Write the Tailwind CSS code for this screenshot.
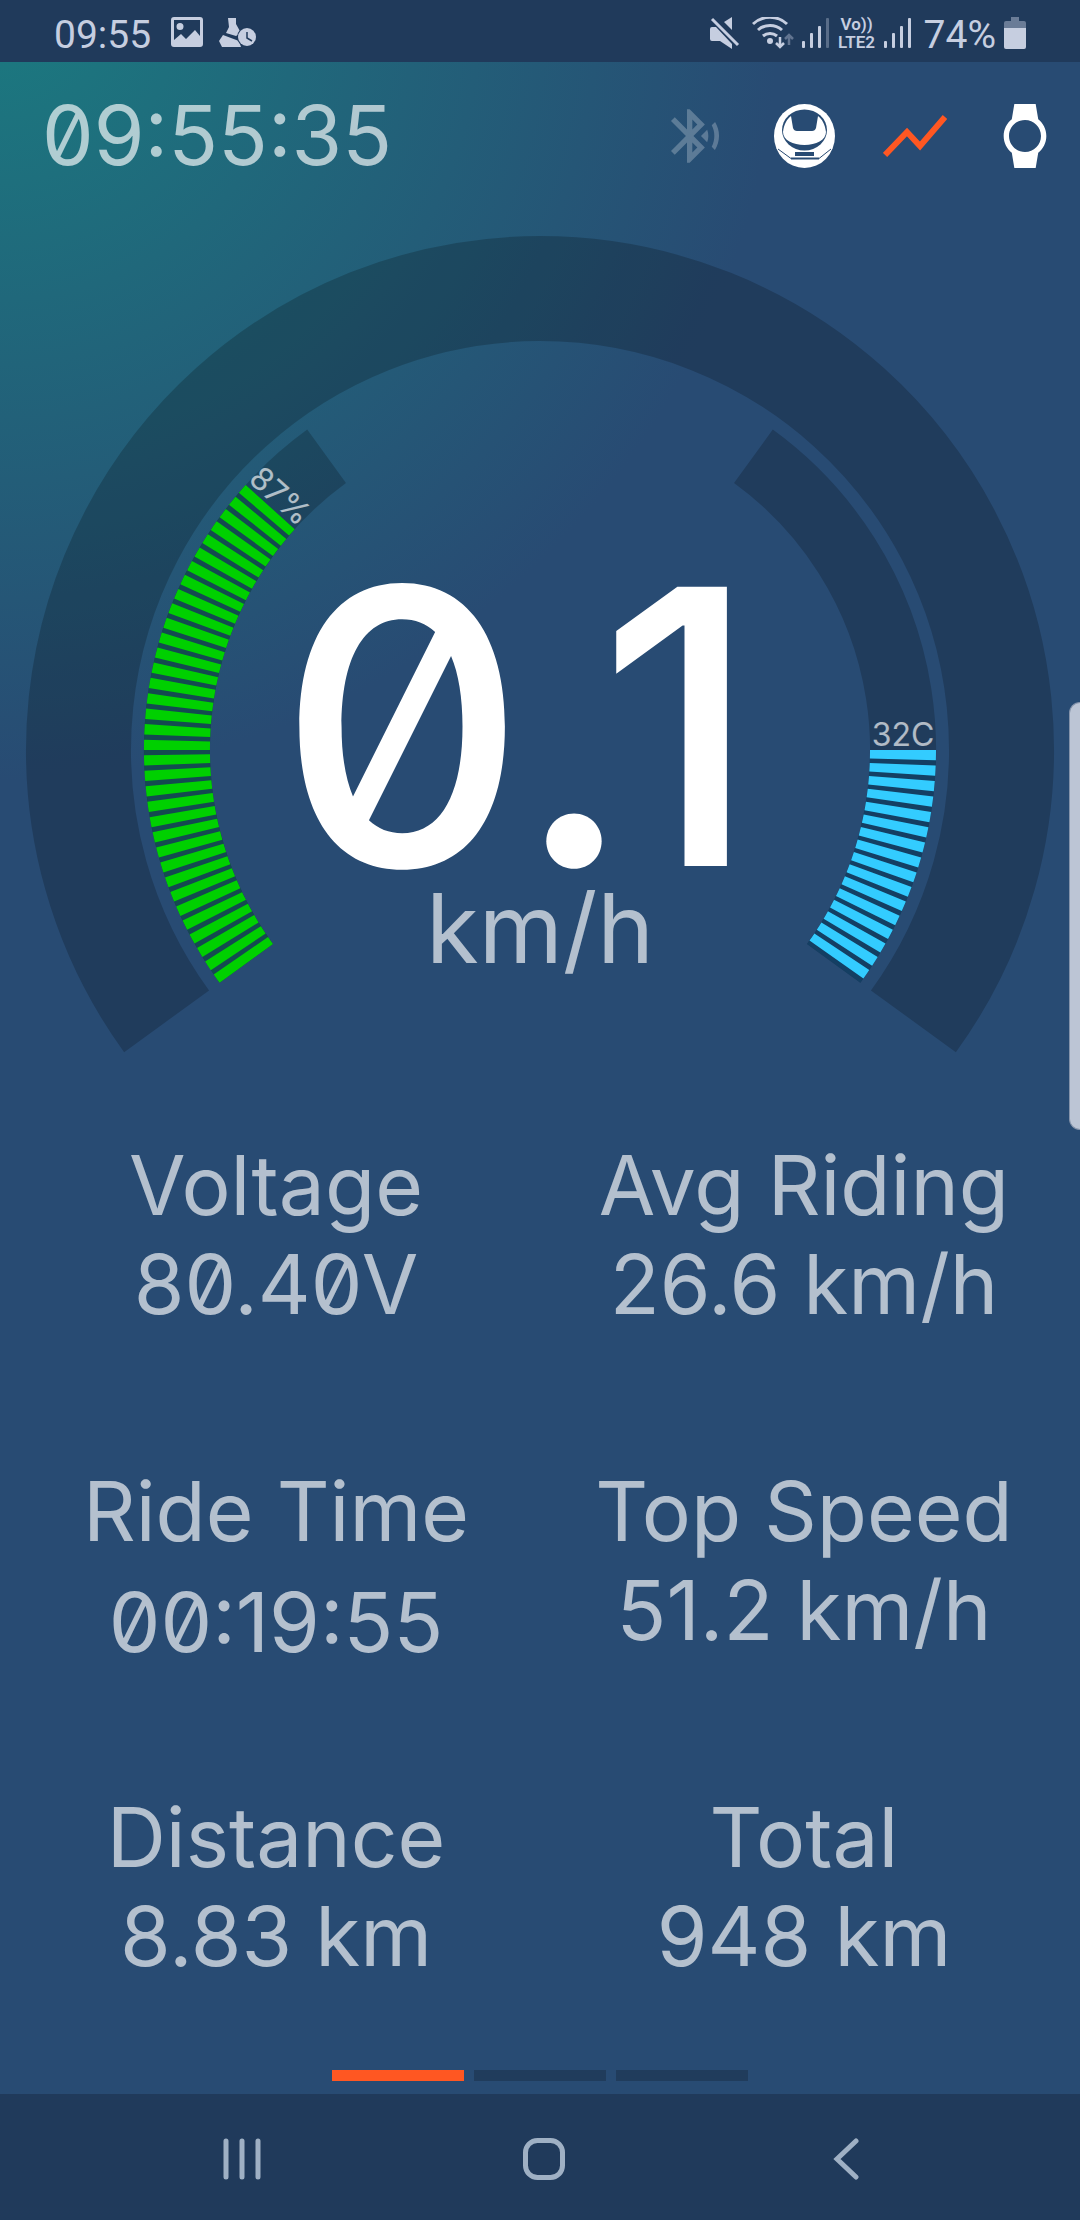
<!DOCTYPE html>
<html lang="en">
<head>
    <meta charset="UTF-8">
    <meta name="viewport" content="width=device-width, initial-scale=1.0">
    <title>Ride Dashboard</title>
    <script src="https://cdn.jsdelivr.net/npm/@tailwindcss/browser@4"></script>
</head>
<body class="min-h-screen flex flex-col bg-[#284b73] font-['Inter','Roboto',sans-serif] overflow-x-hidden">

<!-- Status bar -->
<header class="h-[62px] shrink-0 bg-[#203a5b] text-[#c6cee0] font-['Roboto','Liberation_Sans',sans-serif] flex items-center justify-between px-[54px]">
    <div class="flex items-center">
        <span class="text-[39px] leading-none mt-2">09:55</span>
        <svg class="w-8 h-8 ml-5 mt-1" viewBox="0 0 32 32" fill="currentColor">
            <path fill-rule="evenodd" d="M3 0h26a3 3 0 0 1 3 3v24a3 3 0 0 1-3 3H3a3 3 0 0 1-3-3V3a3 3 0 0 1 3-3zM3 3v20l7-6 5 5 9-9 5 6V3zM9 6a3.500 3.500 0 1 1 0 7 3.500 3.500 0 0 1 0-7z"/>
        </svg>
        <svg class="w-[38px] h-8 ml-4 mt-1" viewBox="0 0 38 32" fill="currentColor">
            <path d="M9 1h8v6l5 9-5 3-10-3 3-6z"/>
            <path d="M4 18l16 6 2 6H3l-3-6z"/>
            <circle cx="28" cy="20" r="10" fill="#203a5b"/>
            <circle cx="28" cy="20" r="9"/>
            <path d="M28 15v6l5 3" fill="none" stroke="#203a5b" stroke-width="1.500"/>
        </svg>
    </div>
    <div class="flex items-center">
        <!-- Muted -->
        <svg class="w-[30px] h-8 mt-1" viewBox="0 0 30 32" fill="currentColor">
            <path d="M0 12q0-2 2-2h4l16 17v5L10 24H2q-2 0-2-2zM22 0v13l-8-8z"/>
            <path d="M2 2l26 26" stroke="currentColor" stroke-width="3" fill="none"/>
        </svg>
        <!-- Wi-Fi -->
        <svg class="w-[44px] h-8 ml-3 mt-1" viewBox="0 0 44 32" fill="none" stroke="currentColor" stroke-width="3">
            <path d="M1 7a25 25 0 0 1 34 0M6 13a18 18 0 0 1 24 0M11 19a11 11 0 0 1 14 0"/>
            <circle cx="18" cy="24" r="3" fill="currentColor" stroke="none"/>
            <path d="M28 20v10M24 26l4 4 4-4" stroke-width="2.500"/>
            <path d="M37 28V18M33 22l4-4 4 4" stroke-width="2.500" class="opacity-40"/>
        </svg>
        <!-- SIM 1 -->
        <svg class="w-7 h-8 ml-1.5 mt-1" viewBox="0 0 28 32" fill="currentColor">
            <rect x="0" y="24" width="3" height="7" rx="1"/>
            <rect x="8" y="16" width="3" height="15" rx="1"/>
            <rect x="16" y="9" width="3" height="22" rx="1"/>
            <rect x="24" y="1" width="3" height="30" rx="1" class="opacity-35"/>
        </svg>
        <div class="ml-1.5 w-[42px] mt-1 text-[17px]/[18px] font-semibold text-center">Vo))<br>LTE2</div>
        <!-- SIM 2 -->
        <svg class="w-7 h-8 ml-1.5 mt-1" viewBox="0 0 28 32" fill="currentColor">
            <rect x="0" y="24" width="3" height="7" rx="1"/>
            <rect x="8" y="16" width="3" height="15" rx="1"/>
            <rect x="16" y="9" width="3" height="22" rx="1"/>
            <rect x="24" y="1" width="3" height="30" rx="1"/>
        </svg>
        <span class="text-[39px] leading-none ml-3 mt-2">74%</span>
        <svg class="w-[22px] h-8 ml-2 mt-1" viewBox="0 0 22 32" fill="currentColor">
            <path d="M7 0h8v4h5a2 2 0 0 1 2 2v5H0V6a2 2 0 0 1 2-2h5z" class="opacity-45"/>
            <path d="M0 11h22v19a2 2 0 0 1-2 2H2a2 2 0 0 1-2-2z"/>
        </svg>
    </div>
</header>

<main class="flex-1 flex flex-col bg-[radial-gradient(circle_780px_at_0_-62px,#1b7a80,#284b73)] text-white/65 slashed-zero">

    <!-- Clock and toolbar -->
    <div class="h-[148px] flex items-center justify-between pl-[42px] pr-[23px]">
        <span class="text-[82px] leading-none">09:55:35</span>
        <div class="flex gap-[46px] text-white">
            <button type="button" aria-label="Bluetooth" class="w-16 h-16 text-white/25">
                <svg viewBox="0 0 24 24" fill="currentColor">
                    <path d="M14.240 12.010l2.320 2.320c.28-.72.44-1.510.44-2.330 0-.82-.16-1.590-.43-2.310l-2.330 2.320zm5.290-5.300l-1.260 1.260c.63 1.210.98 2.570.98 4.020s-.36 2.820-.98 4.020l1.200 1.200c.97-1.540 1.540-3.360 1.540-5.310-.01-1.890-.55-3.670-1.480-5.190zm-3.820 1L10 2H9v7.590L4.410 5 3 6.410 8.590 12 3 17.590 4.410 19 9 14.410V22h1l5.710-5.710-4.300-4.290 4.300-4.290zM11 5.830l1.880 1.880L11 9.590V5.830zm1.880 10.460L11 18.170v-3.760l1.880 1.880z"/>
                </svg>
            </button>
            <button type="button" aria-label="Wheel" class="w-16 h-16">
                <svg viewBox="0 0 64 64" fill="currentColor">
                    <ellipse cx="31.500" cy="32" rx="30.500" ry="32"/>
                    <g fill="#284b73">
                        <ellipse cx="31.500" cy="26" rx="22.500" ry="20.500"/>
                        <path d="M10 28C11 20 14 15 18 12l2 12q1 3 4 3h15q3 0 4-3l2-12c4 3 7 8 8 16 0 8-10 13-21.500 13S10 36 10 28z" fill="#fff"/>
                        <path d="M22 48h19v4H22zM18 53.500h28v2H18z"/>
                    </g>
                    <path d="M5 45l13 9.500M58 45l-12 9.500" stroke="#284b73" fill="none"/>
                </svg>
            </button>
            <button type="button" aria-label="Chart" class="w-16 h-16 text-[#ff5722]">
                <svg viewBox="0 0 64 64" fill="none" stroke="currentColor" stroke-width="6">
                    <path d="M2 51l22-23 13 14 25-29"/>
                </svg>
            </button>
            <button type="button" aria-label="Watch" class="w-16 h-16">
                <svg viewBox="0 0 24 24" fill="currentColor">
                    <path d="M20 12c0-2.540-1.190-4.810-3.040-6.270L16 0H8l-.95 5.730C5.190 7.190 4 9.450 4 12s1.190 4.810 3.050 6.270L8 24h8l.96-5.730C18.810 16.810 20 14.540 20 12zM6 12c0-3.310 2.690-6 6-6s6 2.690 6 6-2.690 6-6 6-6-2.690-6-6z"/>
                </svg>
            </button>
        </div>
    </div>

    <!-- Gauge, origin at the centre of the dial -->
    <svg class="w-full" viewBox="-540 -540 1080 860" fill="none">
        <g stroke="#000" stroke-opacity=".2">
            <path d="M-373.400 271.300A461.500 461.500 0 1 1 373.400 271.300" stroke-width="105"/>
            <path d="M-293.700 213.400A363 363 0 0 1 -213.400 -293.700" stroke-width="66"/>
            <path d="M213.400 -293.700A363 363 0 0 1 293.700 213.400" stroke-width="66"/>
        </g>

        <!-- Battery -->
        <g stroke-width="66">
            <path d="M-293.700 213.400A363 363 0 0 1 -269.800 -242.900" stroke="#144a50"/>
            <path d="M-293.700 213.400A363 363 0 0 1 -269.800 -242.900" stroke="#00d000" pathLength="104" stroke-dasharray="2 1"/>
        </g>
        <text transform="rotate(42)" x="-363" y="-4" text-anchor="middle" fill="currentColor" class="text-[32px]">87%</text>

        <!-- Temperature -->
        <g stroke-width="66">
            <path d="M363 0A363 363 0 0 1 293.700 213.400" stroke="#143f63"/>
            <path d="M363 0A363 363 0 0 1 293.700 213.400" stroke="#33ccff" pathLength="48" stroke-dasharray="2 1"/>
        </g>
        <text x="363" y="-4" text-anchor="middle" fill="currentColor" class="text-[32px]">32C</text>

        <text x="-22" y="116" text-anchor="middle" class="text-[384px] font-medium fill-white">0.1</text>
        <text x="0" y="213" text-anchor="middle" fill="currentColor" class="text-[96px]">km/h</text>
    </svg>

    <!-- Ride figures -->
    <dl class="grid grid-cols-2 gap-y-32 px-3 pt-[66px] text-[82px]/[99px] text-center whitespace-nowrap">
        <div class="h-[198px]">
            <dt>Voltage</dt>
            <dd>80.40V</dd>
        </div>
        <div class="h-[198px]">
            <dt>Avg Riding</dt>
            <dd>26.6 km/h</dd>
        </div>
        <div class="h-[198px]">
            <dt>Ride Time</dt>
            <dd class="pt-3">00:19:55</dd>
        </div>
        <div class="h-[198px]">
            <dt>Top Speed</dt>
            <dd>51.2 km/h</dd>
        </div>
        <div class="h-[198px]">
            <dt>Distance</dt>
            <dd>8.83 km</dd>
        </div>
        <div class="h-[198px]">
            <dt>Total</dt>
            <dd>948 km</dd>
        </div>
    </dl>

    <!-- Page indicator -->
    <div class="mt-auto pb-[13px] flex justify-center gap-[10px]">
        <span class="w-[132px] h-[11px] bg-[#ff5722]"></span>
        <span class="w-[132px] h-[11px] bg-black/20"></span>
        <span class="w-[132px] h-[11px] bg-black/20"></span>
    </div>
</main>

<!-- Navigation bar -->
<nav class="h-[126px] shrink-0 bg-[#203a5b] text-[#9fb0c4] flex items-center justify-center pl-2 pt-1">
    <button type="button" aria-label="Recents" class="w-[302px] flex justify-center">
        <svg class="w-[42px] h-[42px]" viewBox="0 0 42 42" fill="none" stroke="currentColor" stroke-width="5" stroke-linecap="round">
            <path d="M5 3v36M21 3v36M37 3v36"/>
        </svg>
    </button>
    <button type="button" aria-label="Home" class="w-[302px] flex justify-center">
        <svg class="w-[42px] h-[42px]" viewBox="0 0 42 42" fill="none" stroke="currentColor" stroke-width="5">
            <rect x="2.500" y="2.500" width="37" height="37" rx="12"/>
        </svg>
    </button>
    <button type="button" aria-label="Back" class="w-[302px] flex justify-center">
        <svg class="w-[42px] h-[42px]" viewBox="0 0 42 42" fill="none" stroke="currentColor" stroke-width="5" stroke-linecap="round">
            <path d="M31 3L12 21l19 18"/>
        </svg>
    </button>
</nav>

<!-- Edge panel handle -->
<div class="absolute right-0 top-[702px] w-[11px] h-[428px] rounded-l-xl bg-[#bcc5d5] border-l border-y border-[#8493aa]"></div>

</body>
</html>
